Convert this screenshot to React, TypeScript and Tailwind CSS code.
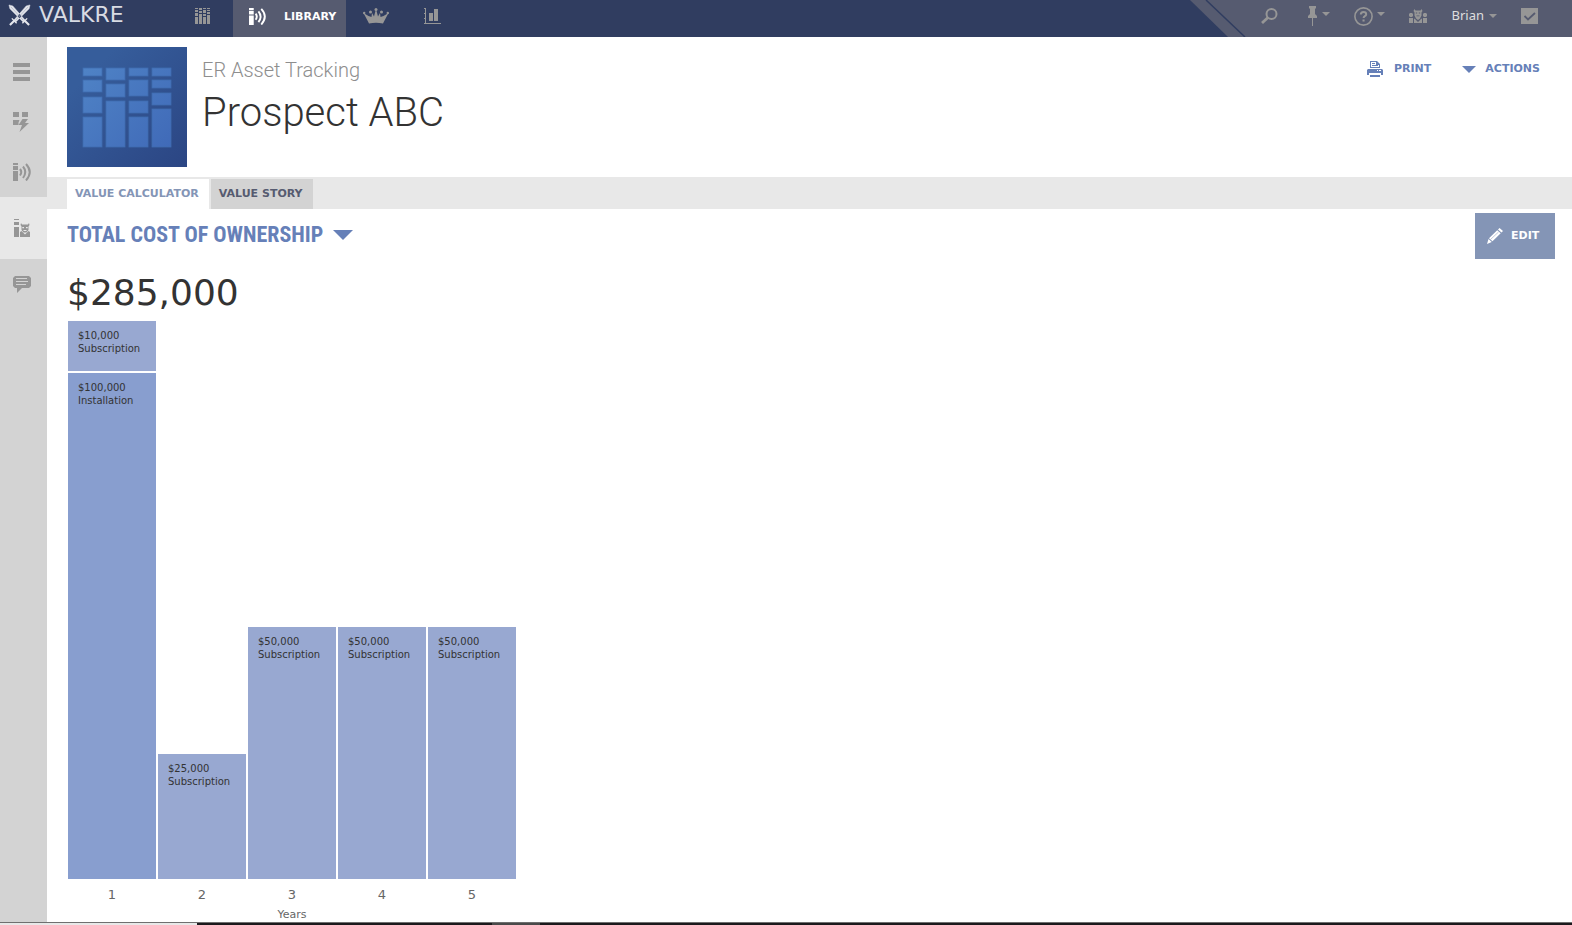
import { useState } from 'react';
import type { ReactNode } from 'react';

type Item = { amount: number; label: string };

const years: { year: number; items: Item[] }[] = [
  { year: 1, items: [{ amount: 10000, label: 'Subscription' }, { amount: 100000, label: 'Installation' }] },
  { year: 2, items: [{ amount: 25000, label: 'Subscription' }] },
  { year: 3, items: [{ amount: 50000, label: 'Subscription' }] },
  { year: 4, items: [{ amount: 50000, label: 'Subscription' }] },
  { year: 5, items: [{ amount: 50000, label: 'Subscription' }] },
];

const money = (n: number) => '$' + n.toLocaleString('en-US');

// 508px per $100k, minus the gap. Small bars still need room for their label
const barHeight = (amount: number) => Math.max(50, Math.round((amount * 508) / 100000) - 2);

function Caret({ className = 'h-1 w-2' }: { className?: string }) {
  return (
    <svg viewBox="0 0 8 4" preserveAspectRatio="none" className={className} fill="currentColor" aria-hidden="true">
      <path d="M0 0h8L4 4z" />
    </svg>
  );
}

function SwordsIcon() {
  return (
    <svg width="23" height="23" viewBox="0 0 24 24" fill="none" stroke="#e4e6ec" aria-hidden="true">
      <path d="M1 1l4 1 13 15-2 2L2 5zM23 1l-4 1L6 17l2 2L22 5z" fill="#e4e6ec" strokeWidth="0.5" />
      <path d="M3 3l13 14M21 3L8 17" stroke="#9aa2b8" strokeWidth="0.6" />
      <path d="M4 15l5 5M20 15l-5 5" strokeWidth="1.4" />
      <path d="M7 17l-5 5M17 17l5 5" strokeWidth="2.2" />
    </svg>
  );
}

function StacksIcon() {
  return (
    <svg width="16" height="16" viewBox="0 0 16 16" fill="currentColor" shapeRendering="crispEdges" aria-hidden="true">
      <path d="M0 0h3v1H0zM0 2h3v2H0zM0 5h3v3H0zM0 9h3v7H0z" />
      <path d="M4 0h3v2H4zM4 3h3v2H4zM4 6h3v10H4z" />
      <path d="M8 0h3v1H8zM8 2h3v3H8zM8 6h3v2H8zM8 9h3v7H8z" />
      <path d="M12 0h3v1h-3zM12 2h3v1h-3zM12 4h3v2h-3zM12 7h3v9h-3z" />
    </svg>
  );
}

function BroadcastIcon({ size = 17 }: { size?: number }) {
  return (
    <svg width={size} height={size} viewBox="0 0 18 18" fill="currentColor" aria-hidden="true">
      <path d="M0 0h5v2H0zM0 3h5v4H0zM0 8h5v10H0z" />
      <g fill="none" stroke="currentColor" strokeWidth="2">
        <path d="M7 6q2.500 3 0 6.500" />
        <path d="M10 3.500q4.500 5.500 0 11.500" />
        <path d="M13 1q7.500 8 0 16.500" />
      </g>
    </svg>
  );
}

function CrownIcon() {
  return (
    <svg width="26" height="16" viewBox="0 0 26 16" fill="currentColor" aria-hidden="true">
      <path d="M.5 5l5 3 3 1 .5-4 2 3.500L13 1l2 7.500L17 5l.5 4 3-1 5-3-4.500 8.500-1 2q-7-1.500-14 0l-1-2z" />
      <circle cx="1.200" cy="5" r="1.200" />
      <circle cx="7.500" cy="4" r="1.500" />
      <circle cx="13" cy="1.500" r="1.500" />
      <circle cx="18.500" cy="4" r="1.500" />
      <circle cx="24.800" cy="5" r="1.200" />
    </svg>
  );
}

function ChartIcon() {
  return (
    <svg width="17" height="16" viewBox="0 0 17 16" fill="currentColor" shapeRendering="crispEdges" aria-hidden="true">
      <path d="M1 0h1v15h15v1H1zM0 0h1v1H0zM0 5h1v1H0zM0 10h1v1H0zM0 15h1v1H0z" />
      <path d="M5 5h4v8H5zM10 1h4v12h-4z" />
    </svg>
  );
}

function SearchIcon() {
  return (
    <svg width="17" height="16" viewBox="0 0 17 16" fill="none" stroke="currentColor" aria-hidden="true">
      <circle cx="10.500" cy="6" r="5" strokeWidth="2" />
      <path d="M7 9.500L1 15" strokeWidth="2.800" />
    </svg>
  );
}

function PinIcon() {
  return (
    <svg width="9" height="20" viewBox="0 0 9 20" fill="currentColor" aria-hidden="true">
      <path d="M1 0h7v2L7 3v5l2 2v2H0v-2l2-2V3L1 2zM4 12h1v8H4z" />
    </svg>
  );
}

function HelpIcon() {
  return (
    <svg width="19" height="19" viewBox="0 0 19 19" fill="none" stroke="currentColor" aria-hidden="true">
      <circle cx="9.500" cy="9.500" r="8.600" strokeWidth="1.600" />
      <path d="M6.800 7.500q0-2.500 2.700-2.500t2.700 2.200q0 1.300-1.400 2-1.200.6-1.200 1.900" strokeWidth="2" />
      <path d="M8.500 12.500h2.100v2H8.500z" fill="currentColor" stroke="none" />
    </svg>
  );
}

function GroupIcon() {
  return (
    <svg width="18" height="14" viewBox="0 0 18 14" fill="currentColor" aria-hidden="true">
      <path d="M5.500 0l1 1.500h5L12.500 0l1 2-1 1.500v3L11 9.500 9 11 7 9.500l-1.500-3v-3l-1-1.500z" />
      <path d="M0 4l1 1V4h2v1l1-1v3L3 8H1L0 7zM18 4l-1 1V4h-2v1l-1-1v3l1 1h2l1-1z" />
      <path d="M0 14V9h4v5zM18 14V9h-4v5z" />
      <path d="M5 14V9.500l1 .5 3 3 3-3 1-.5V14z" />
      <path d="M6.800 3.500h1.400v1H6.800zM9.800 3.500h1.400v1H9.800zM7.500 6.500h3v.8h-3z" fill="#565b70" />
    </svg>
  );
}

function CheckIcon() {
  return (
    <svg width="17" height="16" viewBox="0 0 17 16" aria-hidden="true">
      <path d="M0 0h17v16H0z" fill="currentColor" />
      <path d="M3.500 8l3.500 3.500L14 5" fill="none" stroke="#565b70" strokeWidth="1.800" />
    </svg>
  );
}

function MenuIcon() {
  return (
    <svg width="17" height="18" viewBox="0 0 17 18" fill="currentColor" shapeRendering="crispEdges" aria-hidden="true">
      <path d="M0 0h17v4H0zM0 7h17v4H0zM0 14h17v4H0z" />
    </svg>
  );
}

function FlashIcon() {
  return (
    <svg width="16" height="20" viewBox="0 0 16 20" fill="currentColor" aria-hidden="true">
      <path d="M0 0h6v5H0zM9 0h6v5H9zM0 8h6.500l-1 2.500V13H0z" />
      <path d="M9.500 7H15l-3 4h4L6.500 20l2.500-7H5.500z" />
    </svg>
  );
}

function CustomerIcon() {
  return (
    <svg width="16" height="18" viewBox="0 0 16 18" fill="currentColor" aria-hidden="true">
      <path d="M0 0h5v1H0zM0 3h5v3H0zM0 8h5v10H0z" />
      <path d="M7 4l1 1.500h6L15 4l.5 2-1 1.500V11l-2 2.500h-3l-2-2.500V7.500L6.500 6z" />
      <path d="M6 18v-5l1.500-1L11 15.500l3.500-3.500 1.500 1v5z" />
      <path d="M8.300 8H10v1.200H8.300zM12 8h1.700v1.200H12zM9.500 11h3v1h-3z" fill="#e8e8e8" />
    </svg>
  );
}

function ChatIcon() {
  return (
    <svg width="18" height="17" viewBox="0 0 18 17" aria-hidden="true">
      <path d="M2 0h14l2 2v8l-2 2H9l-5 5v-5H2l-2-2V2z" fill="currentColor" />
      <path d="M3 2.500h11M3 5.500h12M3 8.500h10" stroke="#d3d3d3" strokeWidth="1" />
    </svg>
  );
}

function PrinterIcon() {
  return (
    <svg width="16" height="16" viewBox="0 0 16 16" fill="currentColor" aria-hidden="true">
      <path fillRule="evenodd" d="M3 0h7l3 3v4H3zM4 1v5h8V4H9V1z" />
      <path d="M5 2h3v1H5zM5 4h6v1H5z" />
      <path fillRule="evenodd" d="M1 8h14l1 1v5h-2v-2H2v2H0V9zM10 9v1h1V9zM12 9v1h2V9z" />
      <path d="M3 14h10v2H3z" />
    </svg>
  );
}

function PencilIcon() {
  return (
    <svg width="16" height="16" viewBox="0 0 16 16" fill="currentColor" aria-hidden="true">
      <path d="M12.500 0L16 3l-1.500 1.500L11 1.500zM10.200 2.300l3.500 3L5.500 13.200 2 10.300zM1.500 11l3.300 3L0 16z" />
      <path d="M3.500 11.500l8-7.500" stroke="#8495b6" strokeWidth="0.5" />
    </svg>
  );
}

function AssetLogo() {
  const columns = [
    [[21, 8], [33, 12], [50, 16], [70, 30]],
    [[21, 12], [37, 13], [54, 46]],
    [[21, 8], [33, 16], [54, 12], [70, 30]],
    [[21, 8], [33, 8], [46, 12], [62, 38]],
  ];
  return (
    <svg width="120" height="120" viewBox="0 0 120 120" className="shrink-0" role="img" aria-label="ER Asset Tracking">
      <defs>
        <linearGradient id="logo-bg" x1="0" y1="0" x2="1" y2="1">
          <stop offset="0.200" stopColor="#365d9b" />
          <stop offset="1" stopColor="#2b4583" />
        </linearGradient>
        <linearGradient id="logo-bar" gradientUnits="userSpaceOnUse" x1="16" y1="20" x2="104" y2="100">
          <stop offset="0" stopColor="#4f83c6" />
          <stop offset="1" stopColor="#406ab8" />
        </linearGradient>
      </defs>
      <path d="M0 0h120v120H0z" fill="url(#logo-bg)" />
      {columns.map((bars, i) =>
        bars.map(([y, h]) => (
          <rect key={`${i}-${y}`} x={16 + i * 23} y={y} width="19" height={h} fill="url(#logo-bar)" stroke="#3f6db0" strokeWidth="0.800" />
        ))
      )}
    </svg>
  );
}

function SideButton({ label, active, children }: { label: string; active?: boolean; children: ReactNode }) {
  return (
    <button
      aria-label={label}
      className={active ? 'flex h-[62px] items-center bg-[#e8e8e8] pl-[14px]' : 'flex h-[50px] items-center pl-[13px]'}
    >
      {children}
    </button>
  );
}

function TopBar() {
  return (
    <header className="flex h-[37px] items-stretch bg-[#303d60] text-[#969696]">
      <a href="#" className="flex w-[185px] items-center gap-2 pb-[7px] pl-[8px] text-[22px] leading-6 text-[#d8dbe3]">
        <SwordsIcon />
        <span>VALKRE</span>
      </a>
      <nav className="flex items-stretch">
        <button aria-label="Stacks" className="flex w-12 items-center pb-[5px] pl-[10px]"><StacksIcon /></button>
        <button className="flex w-[113px] items-center gap-[18px] bg-[#565b70] pb-[5px] pl-4 text-[11px] leading-4 font-bold text-white">
          <BroadcastIcon />
          <span className="pt-[2px]">LIBRARY</span>
        </button>
        <button aria-label="Leaders" className="flex w-[60px] items-center justify-center pb-[5px]"><CrownIcon /></button>
        <button aria-label="Reports" className="flex w-[52px] items-center justify-center pb-[5px]"><ChartIcon /></button>
      </nav>
      <svg width="57" height="37" viewBox="0 0 57 37" className="ml-auto" aria-hidden="true">
        <path d="M0 0h58v37H38z" fill="#565b70" />
        <path d="M16 0l39 37" stroke="#303d60" strokeWidth="1.500" />
      </svg>
      <div className="flex items-center gap-6 bg-[#565b70] pr-[34px] pb-[5px] pl-[14px]">
        <button aria-label="Search" className="mr-[6px]"><SearchIcon /></button>
        <button aria-label="Pinned" className="flex items-center gap-[5px]"><PinIcon /><Caret className="mb-1 h-1 w-2" /></button>
        <button aria-label="Help" className="flex items-center gap-[4px]"><HelpIcon /><Caret className="mb-1 h-1 w-2" /></button>
        <button aria-label="Team"><GroupIcon /></button>
        <button className="flex items-center gap-[5px] pb-[2px] font-['Noto_Sans',sans-serif] text-[13px] leading-4 text-[#dedede]">
          Brian
          <Caret className="mt-[2px] h-1 w-2 text-[#969696]" />
        </button>
        <button aria-label="Tasks"><CheckIcon /></button>
      </div>
    </header>
  );
}

function CostChart() {
  return (
    <figure className="mt-[7px] ml-px flex w-fit flex-col">
      <div className="flex items-end gap-[2px]">
        {years.map(({ year, items }) => (
          <div key={year} className="flex w-[88px] flex-col gap-[2px]">
            {items.map((item) => (
              <div
                key={item.label}
                className={`px-[10px] pt-2 text-[10px] leading-[13px] text-[#333333] ${item.label === 'Installation' ? 'bg-[#889ecf]' : 'bg-[#98a8d1]'}`}
                style={{ height: barHeight(item.amount) }}
              >
                {money(item.amount)}
                <br />
                {item.label}
              </div>
            ))}
          </div>
        ))}
      </div>
      <div className="mt-[7px] flex gap-[2px] text-center text-[13px] leading-[18px] text-[#666666]">
        {years.map(({ year }) => (
          <span key={year} className="w-[88px]">{year}</span>
        ))}
      </div>
      <figcaption className="mt-[3px] text-center text-[11px] leading-[15px] text-[#666666]">Years</figcaption>
    </figure>
  );
}

export default function App() {
  const [tab, setTab] = useState('VALUE CALCULATOR');
  const total = years.flatMap((y) => y.items).reduce((sum, i) => sum + i.amount, 0);

  return (
    <div className="flex min-h-screen flex-col bg-white font-['DejaVu_Sans',Verdana,sans-serif]">
      <TopBar />
      <div className="flex flex-1">
        <aside className="flex w-[47px] shrink-0 flex-col bg-[#d3d3d3] pt-[10px] text-[#969696]">
          <SideButton label="Menu"><MenuIcon /></SideButton>
          <SideButton label="Quick actions"><FlashIcon /></SideButton>
          <SideButton label="Library"><BroadcastIcon size={18} /></SideButton>
          <SideButton label="Customer" active><CustomerIcon /></SideButton>
          <SideButton label="Comments"><ChatIcon /></SideButton>
        </aside>

        <main className="min-w-0 flex-1">
          <div className="flex items-start px-5 py-[10px]">
            <AssetLogo />
            <div className="ml-[15px] pt-[10px] font-[Roboto,sans-serif] font-light">
              <p className="text-[20px] leading-[26px] text-[#8e8e8e]">ER Asset Tracking</p>
              <h1 className="text-[40px] leading-[60px] text-[#333333]">Prospect ABC</h1>
            </div>
            <div className="mr-3 ml-auto flex gap-[31px] pt-[13px] text-[11px] leading-[18px] font-bold text-[#6680b8]">
              <button className="flex items-center gap-[11px]"><PrinterIcon />PRINT</button>
              <button className="flex items-center gap-[9px]"><Caret className="h-[7px] w-[14px]" />ACTIONS</button>
            </div>
          </div>

          <div role="tablist" className="flex h-8 gap-[2px] bg-[#e8e8e8] px-5 pt-[2px] text-[11px] font-bold">
            {['VALUE CALCULATOR', 'VALUE STORY'].map((name) => (
              <button
                key={name}
                role="tab"
                aria-selected={tab === name}
                onClick={() => setTab(name)}
                className={`pr-[10px] pl-2 ${tab === name ? 'bg-white text-[#8495b6]' : 'bg-[#d3d3d3] text-[#565b70]'}`}
              >
                {name}
              </button>
            ))}
          </div>

          <section className="pr-[17px] pl-5">
            <div className="flex items-start justify-between pt-1">
              <button className="flex items-center gap-[10px] pt-[9px] font-['Liberation_Sans_Narrow','Roboto_Condensed',Roboto,sans-serif] text-[22px] leading-[26px] font-bold text-[#6680b8]">
                TOTAL COST OF OWNERSHIP
                <Caret className="h-[10px] w-5" />
              </button>
              <button className="flex h-[46px] w-20 items-center gap-2 bg-[#8495b6] pl-3 text-[11px] font-bold text-white">
                <PencilIcon />
                EDIT
              </button>
            </div>
            <p className="mt-[13px] text-[36px] leading-[42px] text-[#333333]">{money(total)}</p>
            <CostChart />
          </section>
        </main>
      </div>
      <div aria-hidden="true" className="flex h-[3px] border-t border-[#6f6f6f] bg-[#1b191c]">
        <div className="w-[197px] bg-[#e8e8e8]" />
        <div className="ml-[295px] w-12 bg-[#4a4a4a]" />
      </div>
    </div>
  );
}
